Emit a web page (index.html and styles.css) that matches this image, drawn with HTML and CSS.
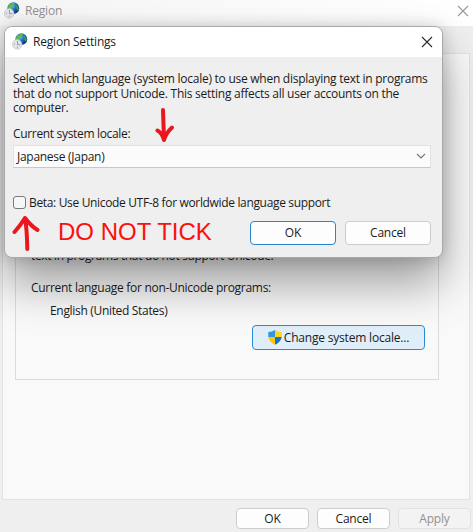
FILE: index.html
```
<!DOCTYPE html>
<html lang="en">
<head>
<meta charset="utf-8">
<title>Region</title>
<link rel="stylesheet" href="styles.css">
</head>
<body>
<svg class="defs" width="0" height="0" aria-hidden="true">
  <defs>
    <radialGradient id="sea" cx=".4" cy=".3" r=".75">
      <stop offset="0" stop-color="#6cc4f4"/><stop offset=".5" stop-color="#1e62c4"/><stop offset="1" stop-color="#0b2364"/>
    </radialGradient>
    <symbol id="region" viewBox="0 0 16 17">
      <circle cx="9.3" cy="6.2" r="5.9" fill="url(#sea)"/>
      <path d="M5 3Q8 .2 11 1.3L10 3.5 7.5 5 8 7.5 5 8 3.7 6Z" fill="#65b846"/>
      <path d="M12 2.3 14.3 4.8 14.9 7.5 13.3 8.5 12 6Z" fill="#319c58"/>
      <circle cx="5.2" cy="11.4" r="4.8" fill="#dfe5e9" stroke="#b4bdc3" stroke-width=".6"/>
      <path d="M5.5 8v3.7H8.3M5.4 13.8v1M2 11.3h1" fill="none" stroke="#7d8995" stroke-width=".8"/>
    </symbol>
  </defs>
</svg>
<div class="window">
  <header class="titlebar">
    <svg class="app-icon"><use href="#region"/></svg>
    <span class="t title">Region</span>
    <svg class="close" viewBox="0 0 12 12"><path d="M1 1 11 11M11 1 1 11"/></svg>
  </header>
  <main class="panel">
    <section class="group">
      <p class="t clipped">text in programs that do not support Unicode.</p>
      <p class="t current">Current language for non-Unicode programs:</p>
      <p class="t english">English (United States)</p>
      <button class="btn change">
        <svg class="shield" viewBox="0 0 14 15">
          <path d="M7 0Q4 2 .3 2V7H7Z" fill="#3497d9"/><path d="M7 0Q10 2 13.7 2V7H7Z" fill="#ffd51d"/>
          <path d="M.3 7Q.8 11.8 7 14.7V7Z" fill="#f8c51a"/><path d="M13.7 7Q13.2 11.8 7 14.7V7Z" fill="#1775bd"/>
        </svg>
        <span class="t change-label">Change system locale...</span>
      </button>
    </section>
  </main>
  <footer class="actions">
    <button class="btn"><span class="t">OK</span></button>
    <button class="btn"><span class="t">Cancel</span></button>
    <button class="btn disabled"><span class="t">Apply</span></button>
  </footer>
</div>

<div class="dialog">
  <header class="dialog-title">
    <svg class="app-icon"><use href="#region"/></svg>
    <span class="t title">Region Settings</span>
    <svg class="close" viewBox="0 0 12 12"><path d="M1 1 11 11M11 1 1 11"/></svg>
  </header>
  <div class="dialog-body">
    <p class="t intro">Select which language (system locale) to use when displaying text in programs<br>that do not support Unicode. This setting affects all user accounts on the<br>computer.</p>
    <p class="t label">Current system locale:</p>
    <div class="select">
      <span class="t japan">Japanese (Japan)</span>
      <svg class="chevron" viewBox="0 0 10 6"><path d="M1 1 5 5 9 1"/></svg>
    </div>
    <div class="check"><span class="box"></span><span class="t beta">Beta: Use Unicode UTF-8 for worldwide language support</span></div>
    <div class="dialog-actions">
      <span class="warning">DO NOT TICK</span>
      <button class="btn primary"><span class="t">OK</span></button>
      <button class="btn"><span class="t">Cancel</span></button>
    </div>
  </div>
</div>
<svg class="arrow down" viewBox="0 0 20 36"><path d="M8 3 9 33M2.5 23.5Q7 26 9 33Q11 26 17 20.5"/></svg>
<svg class="arrow up" viewBox="0 0 28 37"><path d="M15.3 35Q15 15 13 4M2.5 18Q8 12 13 4Q19 12 25.5 16"/></svg>
</body>
</html>
```

FILE: styles.css
```
* { box-sizing: border-box; }
body { margin: 0; width: 473px; height: 532px; overflow: hidden; position: relative; background: #efefef; color: #1b1b1b; font: 12px/15px "Open Sans", "Noto Sans", sans-serif; }
p { margin: 0; }
.defs { position: absolute; }
.t { white-space: nowrap; letter-spacing: -0.2px; }
.window { height: 532px; display: flex; flex-direction: column; }
.titlebar { height: 26px; flex: none; background: linear-gradient(90deg, #f5f5f5, #fff); display: flex; align-items: center; padding: 0 4px 5px; color: #919191; }
.app-icon { width: 16px; height: 17px; flex: none; }
.title { margin-left: 5px; }
.close { width: 12px; height: 12px; margin-left: auto; fill: none; stroke: #292929; stroke-width: 1.1; }
.titlebar .close { stroke: #999; }
.panel { margin: 27px 3px 0 2px; height: 447px; flex: none; border: 1px solid #e3e3e3; background: #f9f9f9; padding: 0 30px 0 12px; }
.group { height: 326px; border: 1px solid #dcdcdc; border-top: 0; padding: 194px 13px 0 15px; display: flex; flex-direction: column; align-items: flex-start; }
.clipped { letter-spacing: -0.34px; }
.current { margin-top: 17px; letter-spacing: -0.29px; }
.english { margin: 8px 0 0 19px; letter-spacing: -0.32px; }
.btn { margin: 0; padding: 0; font: inherit; color: inherit; display: flex; align-items: center; justify-content: center; border: 1px solid #cdcdcd; border-radius: 4px; background: #fdfdfd; }
.change { width: 173px; height: 25px; margin-top: 7px; align-self: flex-end; border-color: #298bd4; background: #e0eefa; }
.shield { width: 14px; height: 15px; margin-right: 2px; }
.change-label { letter-spacing: -0.2px; }
.actions { display: flex; justify-content: flex-end; gap: 8px; padding: 8px 2px 0 0; }
.actions .btn { width: 73px; height: 21px; }
.actions .disabled { background: #f3f3f3; border-color: #e2e2e2; color: #929292; }
.dialog { position: absolute; left: 4px; top: 26px; width: 439px; height: 232px; border: 1px solid #a8a8a8; border-radius: 8px; background: #efefef; overflow: hidden; box-shadow: 0 26px 46px rgba(0,0,0,.36), 0 1px 16px rgba(0,0,0,.18); }
.dialog-title { height: 30px; background: #fff; display: flex; align-items: center; padding: 0 9px 1px 7px; }
.dialog-body { padding: 15px 8px 0; }
.intro { line-height: 14.5px; height: 43.5px; letter-spacing: -0.26px; }
.label { margin-top: 10px; letter-spacing: -0.33px; }
.select { height: 23px; width: 418px; margin-top: 4px; padding: 0 4px 0 3px; background: #fbfbfb; border: 1px solid #e2e2e2; border-bottom: 1px solid #c8c8c8; display: flex; align-items: center; justify-content: space-between; }
.japan { letter-spacing: -0.28px; }
.chevron { width: 10px; height: 6px; fill: none; stroke: #777; stroke-width: 1.1; }
.check { display: flex; align-items: center; margin-top: 27px; height: 15px; }
.box { width: 13px; height: 13px; border: 1px solid #797979; border-radius: 3px; background: #f7f7f7; margin-right: 3px; }
.beta { letter-spacing: -0.34px; }
.dialog-actions { display: flex; gap: 9px; margin-top: 11px; }
.dialog-actions .btn { width: 86px; height: 24px; }
.dialog-actions .primary { border-color: #2286d1; }
.warning { font: 24px/22px "Liberation Sans", Arial, sans-serif; color: #fb0f0f; padding-left: 45px; width: 228px; white-space: nowrap; }
.arrow { position: absolute; fill: none; stroke: #e8181e; stroke-width: 4; stroke-linecap: round; stroke-linejoin: round; }
.down { left: 155px; top: 107px; width: 20px; height: 36px; }
.up { left: 12px; top: 214px; width: 28px; height: 37px; }
```
